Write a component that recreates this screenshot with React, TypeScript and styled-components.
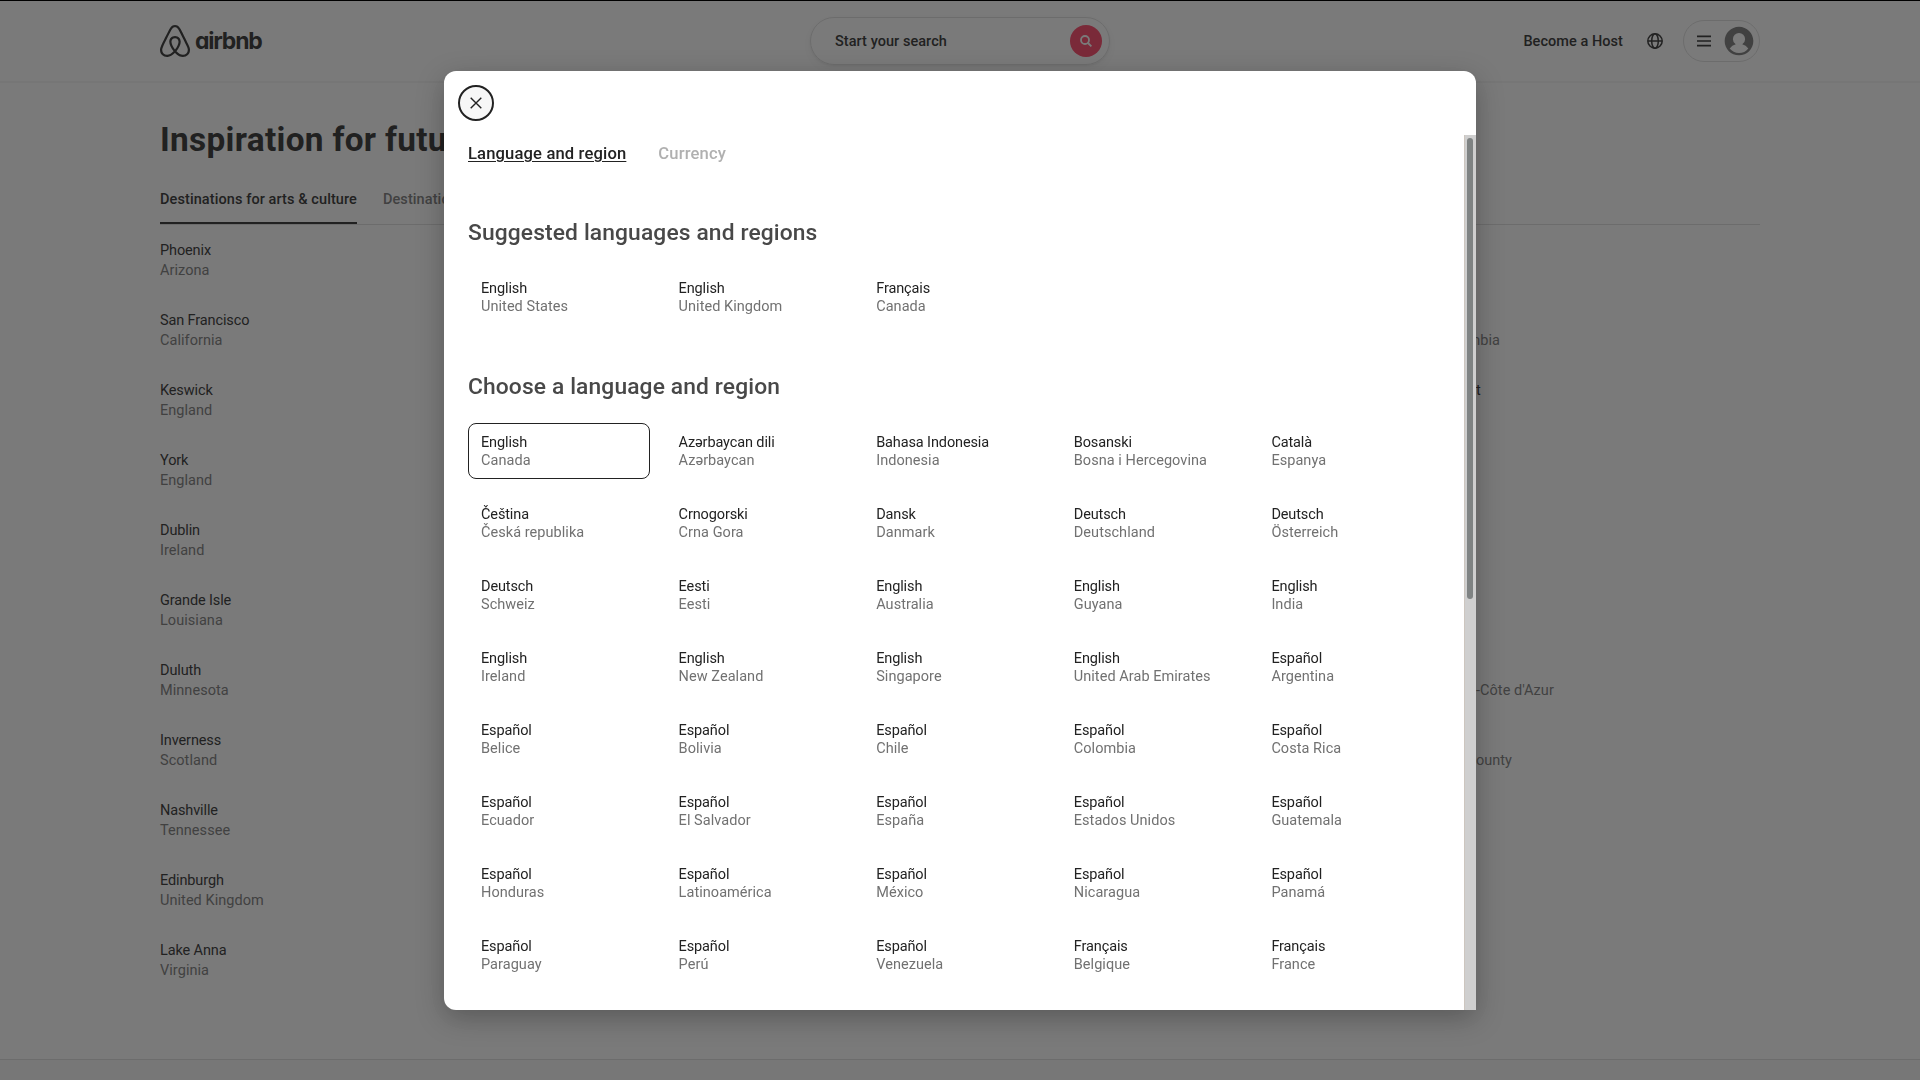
import React from "react";
import styled, { createGlobalStyle } from "styled-components";

const GlobalStyle = createGlobalStyle`
  *, *::before, *::after { box-sizing: border-box; }
  html { overflow: hidden; background: #fff; }
  body {
    margin: 0;
    color: #222;
    font-family: Roboto, "Noto Sans", sans-serif;
    font-size: 14.5px;
    line-height: 18px;
    letter-spacing: 0.05px;
  }
  h1, h2, p { margin: 0; }
  button { font: inherit; letter-spacing: inherit; color: inherit; border: 0; padding: 0; background: none; text-align: left; }
`;

const Page = styled.div`
  display: flex;
  flex-direction: column;
  height: 1080px;
  overflow: hidden;
  border-top: 1px solid #000;
`;

const Header = styled.header`
  display: grid;
  grid-template-columns: 1fr 300px 1fr;
  align-items: center;
  flex: none;
  height: 80px;
  padding: 0 160px;
  box-shadow: 0 2px 1px rgba(0, 0, 0, 0.045);
`;

const Logo = styled.div`
  display: flex;
  align-items: center;
  gap: 5px;
  svg { display: block; }
`;

const Wordmark = styled.span`
  font-family: Inter, sans-serif;
  font-weight: 700;
  font-size: 23px;
  line-height: 28px;
  letter-spacing: -1.2px;
  font-feature-settings: "cv11";
`;

const SearchPill = styled.button`
  display: flex;
  align-items: center;
  justify-content: space-between;
  height: 48px;
  padding: 0 7px 0 24px;
  border: 1px solid #ddd;
  border-radius: 24px;
  font-weight: 500;
  box-shadow: 0 1px 2px rgba(0, 0, 0, 0.08), 0 4px 12px rgba(0, 0, 0, 0.05);
`;

const HeaderLabel = styled.span`
  padding-top: 2px;
`;

const SearchBadge = styled.span`
  display: grid;
  place-items: center;
  width: 32px;
  height: 32px;
  border-radius: 50%;
  background: #ff385c;
  svg { display: block; }
`;

const UserNav = styled.nav`
  display: flex;
  align-items: center;
  justify-content: flex-end;
  font-weight: 500;
  svg { display: block; }
`;

const GlobeButton = styled.button`
  margin: 0 20px 0 24px;
`;

const ProfilePill = styled.button`
  display: flex;
  align-items: center;
  justify-content: space-between;
  width: 77px;
  height: 42px;
  padding: 0 5px 0 13px;
  border: 1px solid #ddd;
  border-radius: 21px;
`;

const Main = styled.main`
  flex: none;
  height: 978px;
  padding: 41px 160px 0;
`;

const PageTitle = styled.h1`
  font-size: 33.4px;
  line-height: 36px;
  letter-spacing: 0.3px;
  font-weight: 700;
`;

const PageTabs = styled.div`
  display: flex;
  gap: 26px;
  height: 50px;
  margin-top: 17px;
  border-bottom: 1px solid #ddd;
`;

const PageTab = styled.button<{ $active?: boolean }>`
  height: 49px;
  padding-top: 2px;
  font-weight: 500;
  letter-spacing: 0.09px;
  white-space: nowrap;
  color: ${(p) => (p.$active ? "#222" : "#717171")};
  border-bottom: 2px solid ${(p) => (p.$active ? "#222" : "transparent")};
`;

const Destinations = styled.div`
  display: grid;
  grid-template-columns: 1211px 1fr;
  padding-top: 16px;
`;

const DestinationColumn = styled.div`
  display: flex;
  flex-direction: column;
`;

const Destination = styled.div<{ $indent?: number }>`
  height: 70px;
  padding-left: ${(p) => p.$indent ?? 0}px;
  line-height: 20px;
  white-space: nowrap;
`;

const Name = styled.p`
  letter-spacing: -0.12px;
`;

const Muted = styled.p`
  color: #717171;
`;

const Footer = styled.footer`
  flex: 1;
  background: #f7f7f7;
  border-top: 1px solid #ddd;
`;

const Overlay = styled.div`
  position: fixed;
  inset: 1px 0 0;
  display: grid;
  place-items: center;
  background: rgba(34, 34, 34, 0.6);
`;

const Modal = styled.section`
  display: flex;
  flex-direction: column;
  width: 1032px;
  height: 939px;
  background: #fff;
  border-radius: 12px 12px 0 12px;
  box-shadow: 0 8px 28px rgba(0, 0, 0, 0.28);
`;

const ModalHeader = styled.div`
  display: flex;
  align-items: center;
  flex: none;
  height: 64px;
  padding-left: 14px;
`;

const CloseButton = styled.button`
  display: grid;
  place-items: center;
  width: 36px;
  height: 36px;
  border: 2px solid #222;
  border-radius: 50%;
  background: #f7f7f7;
`;

const ModalBody = styled.div`
  display: flex;
  flex: 1;
  min-height: 0;
`;

const ScrollArea = styled.div`
  flex: 1;
  min-width: 0;
  padding: 9px 8px 0 24px;
  overflow: hidden;
`;

const ScrollTrack = styled.div`
  display: flex;
  flex-direction: column;
  align-items: center;
  width: 12px;
  padding: 3px 0 0 0;
  background: #cfcfcf;
  border-left: 1px solid #cdc6bf;
`;

const ScrollThumb = styled.div`
  width: 6px;
  height: 461px;
  margin-left: -1px;
  border-radius: 3px;
  background: #7f8383;
`;

const ModalTabs = styled.div`
  display: flex;
  gap: 32px;
  margin-bottom: 56px;
`;

const ModalTab = styled.button<{ $active?: boolean }>`
  font-size: 16.6px;
  line-height: 20px;
  letter-spacing: 0.14px;
  font-weight: 500;
  color: ${(p) => (p.$active ? "#222" : "#b0b0b0")};
  text-decoration: ${(p) => (p.$active ? "underline" : "none")};
  text-decoration-thickness: 1px;
  text-underline-offset: 2px;
`;

const SectionTitle = styled.h2`
  font-size: 22.8px;
  line-height: 26px;
  letter-spacing: 0.13px;
  font-weight: 500;
  color: #484848;
  margin-bottom: 23px;
`;

const LocaleGrid = styled.div`
  display: grid;
  grid-template-columns: repeat(5, 182px);
  column-gap: 15.6px;
  row-gap: 16px;
  margin-bottom: 49px;
`;

const LocaleCard = styled.button<{ $selected?: boolean }>`
  height: 56px;
  padding: 2px 11px 0 12px;
  border: 1px solid ${(p) => (p.$selected ? "#222" : "transparent")};
  border-radius: 8px;
  white-space: nowrap;
`;

const destinations: Place[] = [
  ["Phoenix", "Arizona"],
  ["San Francisco", "California"],
  ["Keswick", "England"],
  ["York", "England"],
  ["Dublin", "Ireland"],
  ["Grande Isle", "Louisiana"],
  ["Duluth", "Minnesota"],
  ["Inverness", "Scotland"],
  ["Nashville", "Tennessee"],
  ["Edinburgh", "United Kingdom"],
  ["Lake Anna", "Virginia"],
];

type Place = [name: string, area: string, indent?: number];

const lastColumn: Place[] = [
  ["", ""],
  ["", "District of Columbia"],
  ["Sherwood Forest", "", 2],
  ["", ""],
  ["", ""],
  ["", ""],
  ["", "Provence-Alpes-Côte d'Azur", 4],
  ["", "Santa Barbara County"],
];

const suggested: Place[] = [
  ["English", "United States"],
  ["English", "United Kingdom"],
  ["Français", "Canada"],
];

const locales: Place[] = [
  ["English", "Canada"],
  ["Azərbaycan dili", "Azərbaycan"],
  ["Bahasa Indonesia", "Indonesia"],
  ["Bosanski", "Bosna i Hercegovina"],
  ["Català", "Espanya"],
  ["Čeština", "Česká republika"],
  ["Crnogorski", "Crna Gora"],
  ["Dansk", "Danmark"],
  ["Deutsch", "Deutschland"],
  ["Deutsch", "Österreich"],
  ["Deutsch", "Schweiz"],
  ["Eesti", "Eesti"],
  ["English", "Australia"],
  ["English", "Guyana"],
  ["English", "India"],
  ["English", "Ireland"],
  ["English", "New Zealand"],
  ["English", "Singapore"],
  ["English", "United Arab Emirates"],
  ["Español", "Argentina"],
  ["Español", "Belice"],
  ["Español", "Bolivia"],
  ["Español", "Chile"],
  ["Español", "Colombia"],
  ["Español", "Costa Rica"],
  ["Español", "Ecuador"],
  ["Español", "El Salvador"],
  ["Español", "España"],
  ["Español", "Estados Unidos"],
  ["Español", "Guatemala"],
  ["Español", "Honduras"],
  ["Español", "Latinoamérica"],
  ["Español", "México"],
  ["Español", "Nicaragua"],
  ["Español", "Panamá"],
  ["Español", "Paraguay"],
  ["Español", "Perú"],
  ["Español", "Venezuela"],
  ["Français", "Belgique"],
  ["Français", "France"],
];

const BeloIcon = () => (
  <svg width="30" height="32" viewBox="2.5 1 27 30" preserveAspectRatio="none" fill="#222">
    <path d="M16 1c2.008 0 3.463.963 4.751 3.269l.533 1.025c1.954 3.83 6.114 12.54 7.1 14.836l.145.353c.667 1.591.91 2.472.96 3.396l.01.415.001.228c0 4.062-2.877 6.478-6.357 6.478-2.224 0-4.556-1.258-6.709-3.386l-.257-.26-.172-.179h-.011l-.176.185c-2.044 2.1-4.267 3.42-6.414 3.615l-.28.019-.267.006C5.377 31 2.5 28.584 2.5 24.522l.005-.469c.026-.928.23-1.768.83-3.244l.216-.524c.966-2.298 6.083-12.989 7.707-16.034C12.537 1.963 13.992 1 16 1zm0 2c-1.239 0-2.053.539-2.987 2.21l-.523 1.008c-1.926 3.776-6.06 12.43-7.031 14.692l-.345.836c-.427 1.071-.573 1.655-.605 2.24l-.009.33v.206C4.5 27.395 6.411 29 8.857 29c1.773 0 3.87-1.236 5.831-3.354-2.295-2.938-3.855-6.45-3.855-8.91 0-2.913 1.933-5.386 5.178-5.42 3.223.034 5.156 2.507 5.156 5.42 0 2.456-1.555 5.96-3.855 8.907C19.277 27.766 21.37 29 23.143 29c2.447 0 4.358-1.605 4.358-4.478l-.004-.411c-.019-.672-.17-1.296-.714-2.62l-.248-.6c-1.065-2.478-5.993-12.768-7.538-15.664C18.053 3.539 17.24 3 16 3zm.01 10.316c-2.01.021-3.177 1.514-3.177 3.42 0 1.797 1.18 4.58 2.955 7.044l.21.287.174-.234c1.73-2.385 2.898-5.066 2.989-6.875l.006-.221c0-1.906-1.167-3.4-3.156-3.421h-.001z" />
  </svg>
);

const SearchIcon = () => (
  <svg width="12" height="12" viewBox="0 0 12 12" fill="none" stroke="#fff" strokeWidth="1.8">
    <circle cx="5" cy="5" r="4" />
    <path d="M8 8l3.4 3.4" />
  </svg>
);

const GlobeIcon = () => (
  <svg width="16" height="16" viewBox="0 0 16 16" fill="none" stroke="#222" strokeWidth="1.5">
    <circle cx="8" cy="8" r="7.2" />
    <ellipse cx="8" cy="8" rx="3.3" ry="7.2" />
    <path d="M1 8h14" />
  </svg>
);

const MenuIcon = () => (
  <svg width="14" height="12" viewBox="0 0 14 12" stroke="#222" strokeWidth="1.6">
    <path d="M0 1.4h14M0 6h14M0 10.6h14" />
  </svg>
);

const AvatarIcon = () => (
  <svg width="30" height="30" viewBox="0 0 32 32" fill="#717171">
    <path d="M16 .7C7.56.7.7 7.56.7 16S7.56 31.3 16 31.3 31.3 24.44 31.3 16 24.44.7 16 .7zm0 28c-4.02 0-7.6-1.88-9.93-4.81a12.43 12.43 0 0 1 6.45-4.4A6.5 6.5 0 0 1 9.5 14a6.5 6.5 0 0 1 13 0 6.51 6.51 0 0 1-3.02 5.5 12.42 12.42 0 0 1 6.45 4.4A12.67 12.67 0 0 1 16 28.7z" />
  </svg>
);

const CloseIcon = () => (
  <svg width="12" height="12" viewBox="0 0 12 12" fill="none" stroke="#222" strokeWidth="1.4">
    <path d="M0.7 0.7l10.6 10.6M11.3 0.7L0.7 11.3" />
  </svg>
);

function DestinationList({ items }: { items: Place[] }) {
  return (
    <DestinationColumn>
      {items.map(([name, area, indent], i) => (
        <Destination key={i} $indent={indent}>
          <Name>{name || "\u00a0"}</Name>
          <Muted>{area || "\u00a0"}</Muted>
        </Destination>
      ))}
    </DestinationColumn>
  );
}

function Locales({ items, selected }: { items: Place[]; selected?: number }) {
  return (
    <LocaleGrid>
      {items.map(([language, region], i) => (
        <LocaleCard key={i} $selected={i === selected}>
          <Name>{language}</Name>
          <Muted>{region}</Muted>
        </LocaleCard>
      ))}
    </LocaleGrid>
  );
}

export default function App() {
  return (
    <>
      <GlobalStyle />
      <Page>
        <Header>
          <Logo>
            <BeloIcon />
            <Wordmark>airbnb</Wordmark>
          </Logo>
          <SearchPill>
            <HeaderLabel>Start your search</HeaderLabel>
            <SearchBadge>
              <SearchIcon />
            </SearchBadge>
          </SearchPill>
          <UserNav>
            <HeaderLabel>Become a Host</HeaderLabel>
            <GlobeButton aria-label="Choose a language">
              <GlobeIcon />
            </GlobeButton>
            <ProfilePill aria-label="Main menu">
              <MenuIcon />
              <AvatarIcon />
            </ProfilePill>
          </UserNav>
        </Header>
        <Main>
          <PageTitle>Inspiration for future getaways</PageTitle>
          <PageTabs>
            <PageTab $active>Destinations for arts &amp; culture</PageTab>
            <PageTab>Destinations for outdoor adventure</PageTab>
          </PageTabs>
          <Destinations>
            <DestinationList items={destinations} />
            <DestinationList items={lastColumn} />
          </Destinations>
        </Main>
        <Footer />
      </Page>
      <Overlay>
        <Modal role="dialog">
          <ModalHeader>
            <CloseButton aria-label="Close">
              <CloseIcon />
            </CloseButton>
          </ModalHeader>
          <ModalBody>
            <ScrollArea>
              <ModalTabs>
                <ModalTab $active>Language and region</ModalTab>
                <ModalTab>Currency</ModalTab>
              </ModalTabs>
              <SectionTitle>Suggested languages and regions</SectionTitle>
              <Locales items={suggested} />
              <SectionTitle>Choose a language and region</SectionTitle>
              <Locales items={locales} selected={0} />
            </ScrollArea>
            <ScrollTrack>
              <ScrollThumb />
            </ScrollTrack>
          </ModalBody>
        </Modal>
      </Overlay>
    </>
  );
}
